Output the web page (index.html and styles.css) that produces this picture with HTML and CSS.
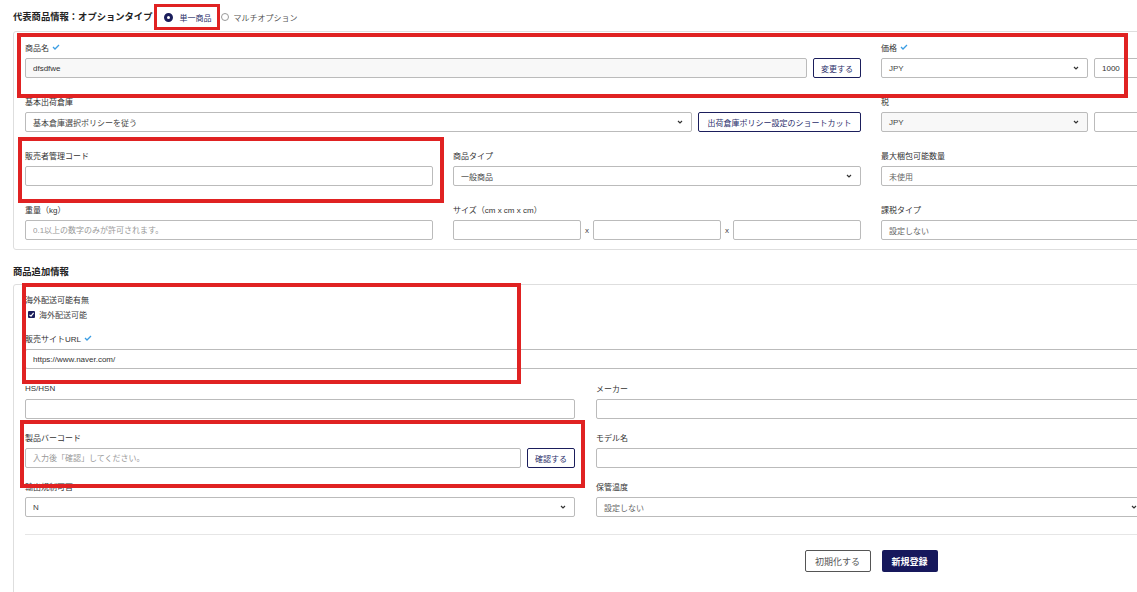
FILE: index.html
```html
<!DOCTYPE html>
<html lang="ja">
<head>
    <meta charset="UTF-8">
    <meta name="viewport" content="width=device-width, initial-scale=1.0">
    <title>商品登録</title>
    <link rel="stylesheet" href="styles.css">
</head>
<body>
    <div class="page">
        <div class="head">
            <h2 class="title">代表商品情報：オプションタイプ</h2>
            <div class="radios">
                <label class="radio on"><span class="dot"></span>単一商品</label>
                <label class="radio"><span class="dot"></span>マルチオプション</label>
            </div>
        </div>

        <div class="card grid4">
            <div class="field span2">
                <div class="label">商品名 <svg class="ok" viewBox="0 0 8 6"><polyline points="1,3 3,5 7,1"/></svg></div>
                <div class="row">
                    <input class="input disabled" type="text" value="dfsdfwe" readonly>
                    <button class="btn-line">変更する</button>
                </div>
            </div>
            <div class="field">
                <div class="label">価格 <svg class="ok" viewBox="0 0 8 6"><polyline points="1,3 3,5 7,1"/></svg></div>
                <div class="row">
                    <div class="select half"><span>JPY</span><svg class="chev" viewBox="0 0 6 4"><polyline points="1,1 3,3 5,1"/></svg></div>
                    <input class="input" type="text" value="1000">
                </div>
            </div>
            <div class="field"></div>

            <div class="field span2">
                <div class="label">基本出荷倉庫</div>
                <div class="row">
                    <div class="select"><span>基本倉庫選択ポリシーを従う</span><svg class="chev" viewBox="0 0 6 4"><polyline points="1,1 3,3 5,1"/></svg></div>
                    <button class="btn-line wide">出荷倉庫ポリシー設定のショートカット</button>
                </div>
            </div>
            <div class="field">
                <div class="label">税</div>
                <div class="row">
                    <div class="select half grey"><span>JPY</span><svg class="chev" viewBox="0 0 6 4"><polyline points="1,1 3,3 5,1"/></svg></div>
                    <input class="input" type="text">
                </div>
            </div>
            <div class="field"></div>

            <div class="field">
                <div class="label">販売者管理コード</div>
                <input class="input" type="text">
            </div>
            <div class="field">
                <div class="label">商品タイプ</div>
                <div class="select"><span>一般商品</span><svg class="chev" viewBox="0 0 6 4"><polyline points="1,1 3,3 5,1"/></svg></div>
            </div>
            <div class="field">
                <div class="label">最大梱包可能数量</div>
                <div class="select muted"><span>未使用</span><svg class="chev" viewBox="0 0 6 4"><polyline points="1,1 3,3 5,1"/></svg></div>
            </div>
            <div class="field"></div>

            <div class="field">
                <div class="label">重量（kg）</div>
                <input class="input" type="text" placeholder="0.1以上の数字のみが許可されます。">
            </div>
            <div class="field">
                <div class="label">サイズ（cm x cm x cm）</div>
                <div class="row size">
                    <input class="input" type="text"><span class="times">x</span>
                    <input class="input" type="text"><span class="times">x</span>
                    <input class="input" type="text">
                </div>
            </div>
            <div class="field">
                <div class="label">課税タイプ</div>
                <div class="select muted"><span>設定しない</span><svg class="chev" viewBox="0 0 6 4"><polyline points="1,1 3,3 5,1"/></svg></div>
            </div>
            <div class="field"></div>
        </div>

        <h2 class="title section">商品追加情報</h2>

        <div class="card extra">
            <div class="label">海外配送可能有無</div>
            <label class="check"><span class="box"><svg viewBox="0 0 7 7"><polyline points="1.5,3.8 3,5.2 5.6,1.8"/></svg></span>海外配送可能</label>

            <div class="field url">
                <div class="label">販売サイトURL <svg class="ok" viewBox="0 0 8 6"><polyline points="1,3 3,5 7,1"/></svg></div>
                <input class="input" type="text" value="https://www.naver.com/">
            </div>

            <div class="grid3">
                <div class="field">
                    <div class="label">HS/HSN</div>
                    <input class="input" type="text">
                </div>
                <div class="field">
                    <div class="label">メーカー</div>
                    <input class="input" type="text">
                </div>
                <div class="field"></div>

                <div class="field">
                    <div class="label">製品バーコード</div>
                    <div class="row">
                        <input class="input" type="text" placeholder="入力後「確認」してください。">
                        <button class="btn-line">確認する</button>
                    </div>
                </div>
                <div class="field">
                    <div class="label">モデル名</div>
                    <input class="input" type="text">
                </div>
                <div class="field"></div>

                <div class="field">
                    <div class="label">輸出規制可否</div>
                    <div class="select"><span>N</span><svg class="chev" viewBox="0 0 6 4"><polyline points="1,1 3,3 5,1"/></svg></div>
                </div>
                <div class="field">
                    <div class="label">保管温度</div>
                    <div class="select muted"><span>設定しない</span><svg class="chev" viewBox="0 0 6 4"><polyline points="1,1 3,3 5,1"/></svg></div>
                </div>
                <div class="field"></div>
            </div>

            <div class="actions">
                <button class="btn-reset">初期化する</button>
                <button class="btn-submit">新規登録</button>
            </div>
        </div>
    </div>

    <!-- red review marks drawn over the form -->
    <div class="mark mark-radio"></div>
    <div class="mark mark-name"></div>
    <div class="mark mark-code"></div>
    <div class="mark mark-url"></div>
    <div class="mark mark-barcode"></div>
</body>
</html>
```

FILE: styles.css
```css
body {
    margin: 0;
    font-family: "Liberation Sans", "Noto Sans CJK JP", sans-serif;
    color: #333;
    background: #fff;
    overflow: hidden;
}

.page {
    width: 1716px;
    padding: 5px 0 0 13px;
}

.head {
    display: flex;
    align-items: center;
    height: 24px;
}

.title {
    margin: 0;
    font-size: 9.3px;
    line-height: 12px;
    font-weight: bold;
    color: #222;
    white-space: nowrap;
}

.radios {
    display: flex;
    align-items: center;
    margin-left: 12px;
}

.radio {
    display: flex;
    align-items: center;
    gap: 4px;
    font-size: 8px;
    color: #555;
    white-space: nowrap;
}

.radio .dot {
    width: 8px;
    height: 8px;
    border: 1px solid #999;
    border-radius: 50%;
    box-sizing: border-box;
}

.radio.on {
    gap: 6px;
    margin-right: 10px;
    color: #2b2f6b;
}

.radio.on .dot {
    width: 9px;
    height: 9px;
    border: 3px solid #1b1e5c;
}

.card {
    border: 1px solid #dedede;
    border-radius: 3px;
    padding: 9px 11px;
}

.grid4 {
    margin-top: 2px;
    display: grid;
    grid-template-columns: repeat(4, 408px);
    column-gap: 20px;
    row-gap: 17px;
}

.span2 {
    grid-column: span 2;
}

.label {
    display: flex;
    align-items: center;
    gap: 3px;
    height: 12px;
    font-size: 8px;
    color: #333;
    white-space: nowrap;
}

.field .label {
    margin-bottom: 5px;
}

.ok {
    width: 8px;
    height: 6px;
    fill: none;
    stroke: #3a9de3;
    stroke-width: 1.3;
}

.row {
    display: flex;
    gap: 6px;
}

.input {
    display: block;
    width: 100%;
    min-width: 0;
    height: 20px;
    padding: 0 7px;
    border: 1px solid #bbb;
    border-radius: 2px;
    box-sizing: border-box;
    font-family: inherit;
    font-size: 8px;
    color: #333;
    background: #fff;
}

.input::placeholder {
    color: #999;
}

.input.disabled {
    background: #f8f8f8;
}

.select {
    display: flex;
    align-items: center;
    justify-content: space-between;
    flex: 1;
    height: 20px;
    padding: 0 8px 0 7px;
    border: 1px solid #bbb;
    border-radius: 2px;
    box-sizing: border-box;
    font-size: 8px;
    color: #444;
    background: #fff;
    white-space: nowrap;
}

.select.half {
    flex: 0 0 207px;
}

.select.grey {
    background: #f8f8f8;
}

.select.muted {
    color: #666;
}

.chev {
    width: 6px;
    height: 4px;
    fill: none;
    stroke: #333;
    stroke-width: 1.2;
}

.btn-line {
    flex: 0 0 auto;
    height: 20px;
    padding: 0 7px;
    border: 1px solid #1b1e5c;
    border-radius: 2px;
    background: #fff;
    font-family: inherit;
    font-size: 8px;
    color: #2b2f6b;
    white-space: nowrap;
}

.btn-line.wide {
    width: 163px;
}

.size {
    gap: 0;
    align-items: center;
}

.size .input {
    flex: 1 1 0;
    width: 0;
}

.times {
    flex: 0 0 12px;
    text-align: center;
    font-size: 8px;
    color: #444;
}

.section {
    margin: 16px 0 6px;
}

.extra {
    padding: 8px 11px 40px;
}

.check {
    display: flex;
    align-items: center;
    gap: 4px;
    height: 12px;
    margin: 3px 0 0 3px;
    font-size: 8px;
    color: #444;
}

.check .box {
    display: flex;
    width: 7px;
    height: 7px;
    background: #1b1e5c;
    border-radius: 1px;
}

.check svg {
    width: 7px;
    height: 7px;
    fill: none;
    stroke: #fff;
    stroke-width: 1.1;
}

.url {
    margin-top: 12px;
}

.grid3 {
    margin-top: 13px;
    display: grid;
    grid-template-columns: repeat(3, 550px);
    column-gap: 21px;
    row-gap: 12px;
}

.actions {
    display: flex;
    justify-content: center;
    gap: 11px;
    margin-top: 17px;
    padding-top: 15px;
    border-top: 1px solid #e6e6e6;
}

.btn-reset,
.btn-submit {
    height: 22px;
    border-radius: 2px;
    font-family: inherit;
    font-size: 9px;
}

.btn-reset {
    width: 66px;
    border: 1px solid #555;
    background: #fff;
    color: #555;
}

.btn-submit {
    width: 56px;
    border: none;
    background: #16185c;
    color: #fff;
    font-weight: bold;
}

.mark {
    position: absolute;
    border: 4px solid #e02222;
    box-sizing: border-box;
}

.mark-radio {
    left: 154px;
    top: 4px;
    width: 66px;
    height: 26px;
    border-width: 3px;
}

.mark-name {
    left: 17px;
    top: 33px;
    width: 1111px;
    height: 65px;
}

.mark-code {
    left: 18px;
    top: 137px;
    width: 426px;
    height: 66px;
}

.mark-url {
    left: 22px;
    top: 283px;
    width: 499px;
    height: 101px;
}

.mark-barcode {
    left: 20px;
    top: 420px;
    width: 565px;
    height: 68px;
}
```
